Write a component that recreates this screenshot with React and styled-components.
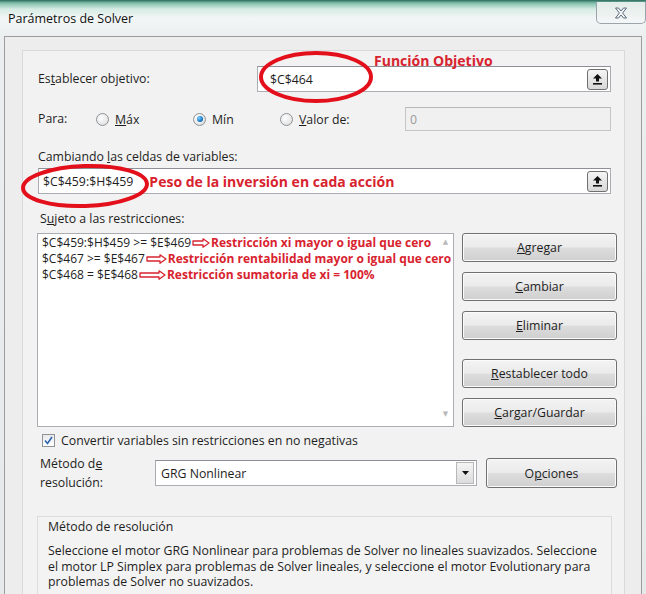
import React from "react";
import styled, { createGlobalStyle } from "styled-components";

const GlobalStyle = createGlobalStyle`
  *, *::before, *::after { box-sizing: border-box; }
  html, body { margin: 0; padding: 0; background: #ececec; }
  body {
    font-family: "Open Sans", "Noto Sans", sans-serif;
    font-size: 12.3px;
    color: #1e1e1e;
  }
`;

const RED = "#d8232f";

const Window = styled.div`
  position: relative;
  width: 646px;
  height: 594px;
  overflow: hidden;
  display: flex;
  flex-direction: column;
  padding: 0 4px;
  background: linear-gradient(
    to bottom,
    #2b6a5c 0px,
    #7fbfa9 3px,
    #d6ebe4 9px,
    #f2f6f6 18px,
    #eceff0 36px,
    #e6e9ea 100%
  );
`;

const TitleBar = styled.div`
  height: 36px;
  display: flex;
  justify-content: space-between;
  align-items: flex-start;
  flex-shrink: 0;
`;

const Title = styled.div`
  padding: 11px 0 0 4px;
  font-size: 12.5px;
  line-height: 16px;
  color: #111;
`;

const CloseButton = styled.div`
  width: 50px;
  height: 22px;
  margin-top: 2px;
  margin-right: -4px;
  border: 1px solid #9aa4aa;
  border-top: none;
  border-radius: 0 0 5px 5px;
  background: linear-gradient(to bottom, #e3ece9, #f4f7f7);
  display: flex;
  align-items: center;
  justify-content: center;
`;

const Client = styled.div`
  flex: 1;
  background: #ededed;
  border: 1px solid #9c9c9c;
  border-bottom: none;
  padding: 13px 16px 0 17px;
  display: flex;
  flex-direction: column;
`;

const Group = styled.div`
  flex: 1;
  border: 1px solid #dadada;
  border-bottom: none;
  background: #f2f2f2;
  padding: 15px 13px 0 15px;
  display: flex;
  flex-direction: column;
`;

const Row = styled.div`
  display: flex;
  align-items: center;
  margin-top: ${(p) => p.$mt || 0}px;
  margin-right: ${(p) => p.$mr || 0}px;
  height: ${(p) => (p.$h ? `${p.$h}px` : "auto")};
`;

const Label = styled.div`
  width: ${(p) => (p.$w ? `${p.$w}px` : "auto")};
  flex-shrink: 0;
  line-height: ${(p) => p.$lh || 16}px;
  margin-top: ${(p) => p.$mt || 0}px;
  margin-left: ${(p) => p.$ml || 0}px;
  white-space: pre-line;
`;

const Field = styled.div`
  flex: ${(p) => (p.$grow ? 1 : "none")};
  width: ${(p) => (p.$w ? `${p.$w}px` : "auto")};
  height: ${(p) => p.$h || 26}px;
  margin-left: ${(p) => p.$ml || 0}px;
  border: 1px solid ${(p) => (p.$disabled ? "#c4c4c4" : "#abadb3")};
  border-top-color: ${(p) => (p.$disabled ? "#b8b8b8" : "#8e9097")};
  background: ${(p) => (p.$disabled ? "#f0f0f0" : "#fff")};
  color: ${(p) => (p.$disabled ? "#9a9a9a" : "#1e1e1e")};
  display: flex;
  align-items: center;
  padding: 0 2px 0 ${(p) => p.$pl || 4}px;
`;

const FieldValue = styled.span`
  flex: 1;
  display: flex;
  align-items: center;
  white-space: nowrap;
`;

const Note = styled.span`
  color: ${RED};
  font-weight: 700;
  font-size: ${(p) => p.$size || 14}px;
  margin-left: ${(p) => p.$ml || 0}px;
  white-space: nowrap;
  flex-shrink: 0;
`;

const RefButton = styled.div`
  width: 21px;
  height: 21px;
  border: 1px solid #707070;
  border-radius: 3px;
  background: linear-gradient(to bottom, #f6f6f6 0%, #e6e6e6 50%, #d8d8d8 100%);
  display: flex;
  align-items: center;
  justify-content: center;
`;

const Option = styled.label`
  display: flex;
  align-items: center;
  gap: 6px;
  flex-shrink: 0;
  width: ${(p) => (p.$w ? `${p.$w}px` : "auto")};
  margin-left: ${(p) => p.$ml || 0}px;
`;

const Radio = styled.span`
  width: 13px;
  height: 13px;
  border-radius: 50%;
  border: 1px solid #8f9397;
  background: radial-gradient(circle at 40% 35%, #ffffff 0%, #e8e8e8 60%, #cfd2d4 100%);
  display: flex;
  align-items: center;
  justify-content: center;

  &::after {
    content: "";
    width: 6px;
    height: 6px;
    border-radius: 50%;
    display: ${(p) => (p.$on ? "block" : "none")};
    background: radial-gradient(circle at 35% 35%, #7fd0ff 0%, #1d7fc8 55%, #0e4f8a 100%);
  }
`;

const Section = styled.div`
  display: flex;
  margin-top: 6px;
  margin-right: -6px;
  gap: 8px;
  height: 196px;
`;

const ListBox = styled.div`
  width: 417px;
  height: 194px;
  flex-shrink: 0;
  margin-left: -1px;
  border: 1px solid #abadb3;
  background: #fff;
  display: flex;
`;

const Lines = styled.div`
  flex: 1;
  padding: 1px 0 0 4px;
  position: relative;
  z-index: 1;
  width: 0;
`;

const Line = styled.div`
  display: flex;
  align-items: center;
  height: 16px;
  line-height: 16px;
  white-space: nowrap;
  font-size: 12px;

  & > svg {
    flex-shrink: 0;
    margin: 0 1px;
  }
`;

const ScrollTrack = styled.div`
  width: 15px;
  display: flex;
  flex-direction: column;
  justify-content: space-between;
  align-items: center;
  padding: 4px 0 8px;
  color: #b9b9b9;
  font-size: 7px;
  font-family: "DejaVu Sans", sans-serif;
`;

const Buttons = styled.div`
  display: flex;
  flex-direction: column;
  gap: 10px;
`;

const Button = styled.div`
  width: ${(p) => p.$w || 155}px;
  height: ${(p) => p.$h || 29}px;
  flex-shrink: 0;
  margin-top: ${(p) => p.$mt || 0}px;
  margin-left: ${(p) => p.$ml || 0}px;
  border: 1px solid #707070;
  border-radius: 3px;
  background: linear-gradient(to bottom, #f3f3f3 0%, #ebebeb 48%, #dddddd 52%, #cfcfcf 100%);
  box-shadow: inset 0 0 0 1px #fbfbfb;
  display: flex;
  align-items: center;
  justify-content: center;
  color: #1e1e1e;
`;

const Check = styled.span`
  width: 13px;
  height: 13px;
  border: 1px solid #8f9397;
  background: linear-gradient(to bottom, #e9e9e9, #ffffff);
  display: flex;
  align-items: center;
  justify-content: center;
`;

const DropArrow = styled.div`
  width: 18px;
  height: 22px;
  border: 1px solid #b8b8b8;
  background: linear-gradient(to bottom, #f4f4f4, #dcdcdc);
  display: flex;
  align-items: center;
  justify-content: center;
`;

const InfoBox = styled.div`
  margin: 24px -1px 0 -1px;
  flex: 1;
  border: 1px solid #dcdcdc;
  border-bottom: none;
  background: #f3f3f3;
  padding: 2px 4px 0 10px;
`;

const InfoTitle = styled.div`
  line-height: 16px;
`;

const InfoText = styled.p`
  margin: 8px 0 0;
  line-height: 15.5px;
`;

const Overlay = styled.svg`
  position: absolute;
  left: 0;
  top: 0;
  pointer-events: none;
  z-index: 5;
`;

const FloatingNote = styled.div`
  position: absolute;
  left: ${(p) => p.$x}px;
  top: ${(p) => p.$y}px;
  color: ${RED};
  font-weight: 700;
  font-size: 14px;
  line-height: 18px;
  z-index: 6;
`;

function UpArrowIcon() {
  return (
    <svg width="11" height="12" viewBox="0 0 11 12">
      <path d="M5.5 1 L10 5.5 H7 V8.5 H4 V5.5 H1 Z" fill="#111" />
      <rect x="1" y="10" width="9" height="1.6" fill="#111" />
    </svg>
  );
}

function HollowArrow({ w = 18 }) {
  return (
    <svg width={w} height="10" viewBox={`0 0 ${w} 10`}>
      <path
        d={`M1 3 H${w - 7} V0.8 L${w - 1} 5 L${w - 7} 9.2 V7 H1 Z`}
        fill="#fff"
        stroke={RED}
        strokeWidth="1.3"
        strokeLinejoin="round"
      />
    </svg>
  );
}

function CloseIcon() {
  return (
    <svg width="14" height="12" viewBox="0 0 14 12">
      <path
        d="M1.5 1 H4.5 L7 4 L9.5 1 H12.5 L8.6 6 L12.5 11 H9.5 L7 8 L4.5 11 H1.5 L5.4 6 Z"
        fill="#f3f5f7"
        stroke="#5d6b7c"
        strokeWidth="1"
        strokeLinejoin="round"
      />
    </svg>
  );
}

const restrictions = [
  { expr: "$C$459:$H$459 >= $E$469", arrow: 18, note: "Restricción xi mayor o igual que cero" },
  { expr: "$C$467 >= $E$467", arrow: 21, note: "Restricción rentabilidad mayor o igual que cero" },
  { expr: "$C$468 = $E$468", arrow: 27, note: "Restricción sumatoria de xi = 100%" },
];

export default function App() {
  return (
    <>
      <GlobalStyle />
      <Window>
        <TitleBar>
          <Title>Parámetros de Solver</Title>
          <CloseButton>
            <CloseIcon />
          </CloseButton>
        </TitleBar>

        <Client>
          <Group>
            <Row $h={26}>
              <Label $w={219}>
                Es<u>t</u>ablecer objetivo:
              </Label>
              <Field $grow $pl={12}>
                <FieldValue>$C$464</FieldValue>
                <RefButton>
                  <UpArrowIcon />
                </RefButton>
              </Field>
            </Row>

            <Row $h={24} $mt={15}>
              <Label $w={58}>Para:</Label>
              <Option $w={97}>
                <Radio />
                <span>
                  <u>M</u>áx
                </span>
              </Option>
              <Option $w={87}>
                <Radio $on />
                <span>Mín</span>
              </Option>
              <Option $w={125}>
                <Radio />
                <span>
                  <u>V</u>alor de:
                </span>
              </Option>
              <Field $grow $h={24} $disabled>
                0
              </Field>
            </Row>

            <Label $mt={18}>
              Cambiando <u>l</u>as celdas de variables:
            </Label>
            <Row $h={26} $mt={3}>
              <Field $grow>
                <FieldValue>
                  $C$459:$H$459
                  <Note $ml={16}>Peso de la inversión en cada acción</Note>
                </FieldValue>
                <RefButton>
                  <UpArrowIcon />
                </RefButton>
              </Field>
            </Row>

            <Label $mt={17} $ml={2}>
              S<u>u</u>jeto a las restricciones:
            </Label>
            <Section>
              <ListBox>
                <Lines>
                  {restrictions.map((r) => (
                    <Line key={r.expr}>
                      {r.expr}
                      <HollowArrow w={r.arrow} />
                      <Note $size={12}>{r.note}</Note>
                    </Line>
                  ))}
                </Lines>
                <ScrollTrack>
                  <span>▲</span>
                  <span>▼</span>
                </ScrollTrack>
              </ListBox>
              <Buttons>
                <Button>
                  <u>A</u>gregar
                </Button>
                <Button>
                  <u>C</u>ambiar
                </Button>
                <Button>
                  <u>E</u>liminar
                </Button>
                <Button $mt={9}>
                  <u>R</u>establecer todo
                </Button>
                <Button>
                  <u>C</u>argar/Guardar
                </Button>
              </Buttons>
            </Section>

            <Row $h={16} $mt={3}>
              <Option $ml={4}>
                <Check>
                  <svg width="9" height="9" viewBox="0 0 9 9">
                    <path d="M1 4.5 L3.5 7.5 L8 1" fill="none" stroke="#2a64b3" strokeWidth="1.6" />
                  </svg>
                </Check>
                <span>Convertir variables sin restricciones en no negativas</span>
              </Option>
            </Row>

            <Row $mt={6} $mr={-6}>
              <Label $w={115} $lh={19} $ml={2}>
                Método d<u>e</u>
                {"\n"}resolución:
              </Label>
              <Field $w={322} $pl={5}>
                <FieldValue>GRG Nonlinear</FieldValue>
                <DropArrow>
                  <svg width="7" height="4" viewBox="0 0 7 4">
                    <path d="M0 0 H7 L3.5 4 Z" fill="#111" />
                  </svg>
                </DropArrow>
              </Field>
              <Button $w={131} $h={30} $ml={9}>
                O<u>p</u>ciones
              </Button>
            </Row>

            <InfoBox>
              <InfoTitle>Método de resolución</InfoTitle>
              <InfoText>
                Seleccione el motor GRG Nonlinear para problemas de Solver no lineales suavizados.
                Seleccione el motor LP Simplex para problemas de Solver lineales, y seleccione el
                motor Evolutionary para problemas de Solver no suavizados.
              </InfoText>
            </InfoBox>
          </Group>
        </Client>

        <Overlay width="646" height="594" viewBox="0 0 646 594">
          <ellipse cx="316" cy="77" rx="55" ry="24" fill="none" stroke="#e3101c" strokeWidth="4" />
          <ellipse
            cx="85"
            cy="186"
            rx="62"
            ry="20"
            fill="none"
            stroke="#e3101c"
            strokeWidth="4"
            transform="rotate(-2 85 186)"
          />
        </Overlay>
        <FloatingNote $x={374} $y={52}>
          Función Objetivo
        </FloatingNote>
      </Window>
    </>
  );
}
